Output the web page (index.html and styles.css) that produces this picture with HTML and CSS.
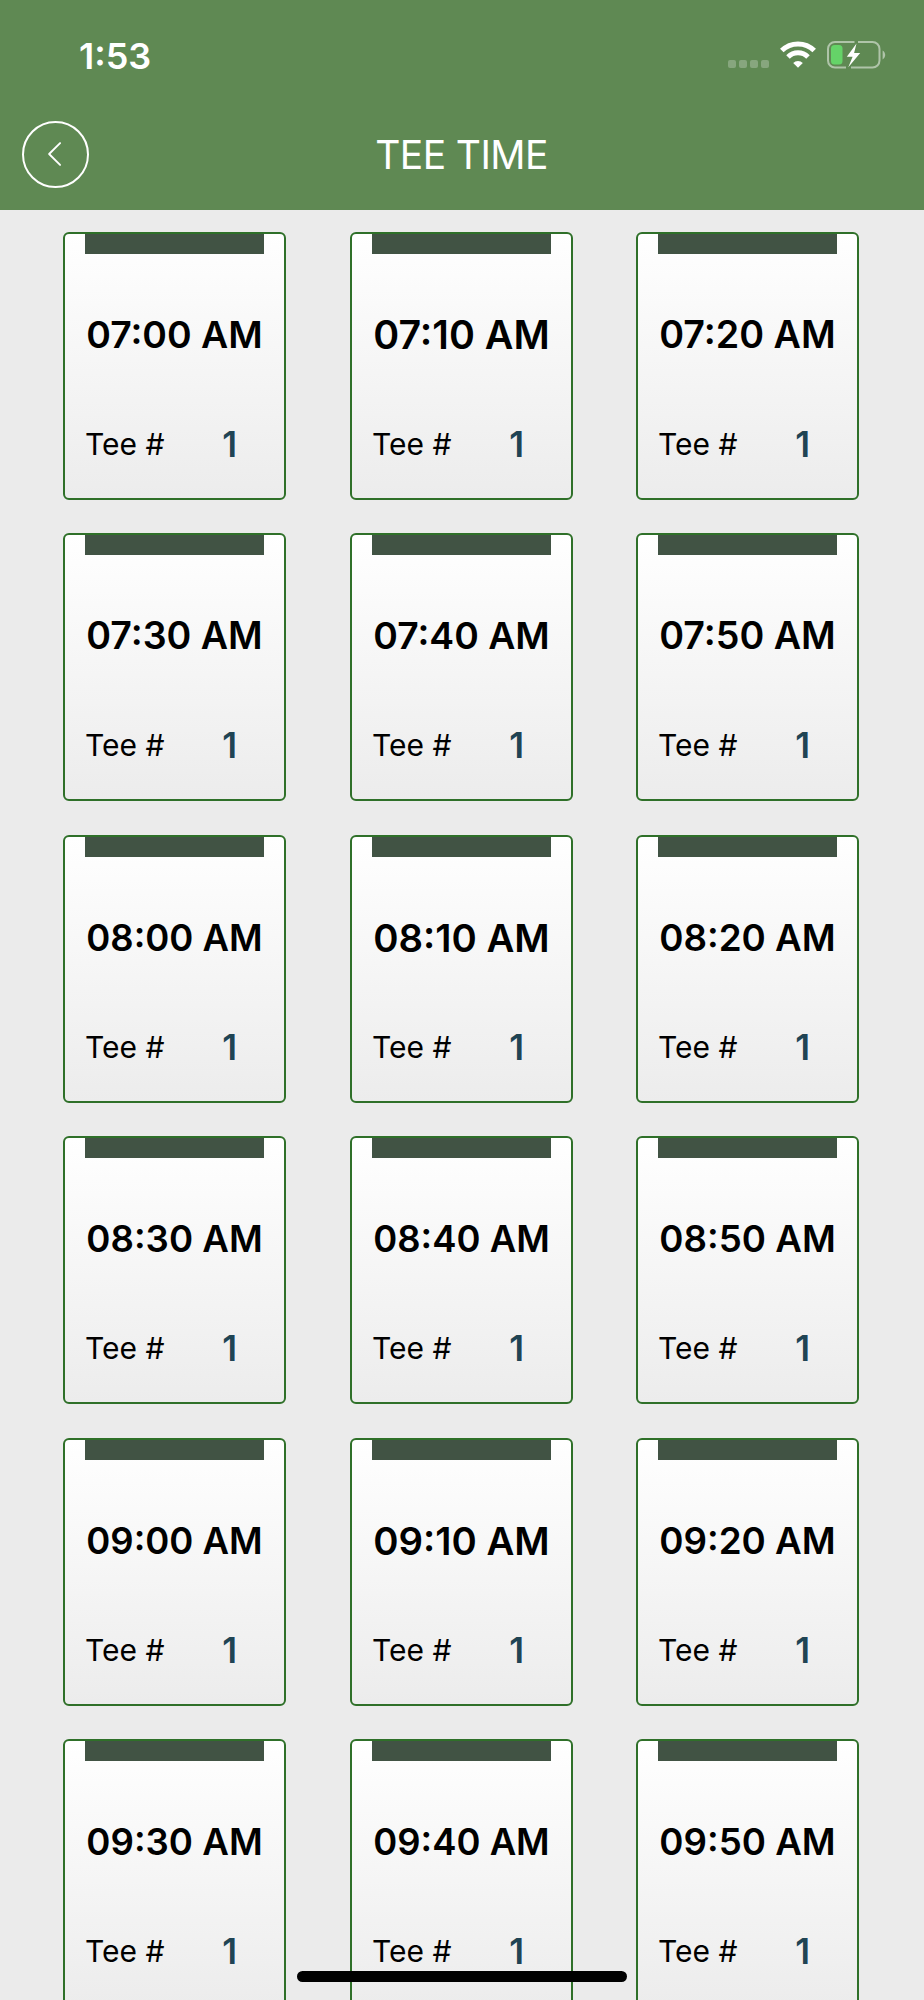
FILE: index.html
```
<!DOCTYPE html>
<html lang="en">
<head>
  <meta charset="UTF-8" />
  <meta name="viewport" content="width=device-width, initial-scale=1.0"/>
  <title>Tee Time</title>
  <link rel="stylesheet" href="styles.css">
</head>
<body>
  <header>
    <div class="status-bar">
      <span class="clock">1:53</span>
      <div class="status-icons">
        <div class="signal"><i></i><i></i><i></i><i></i></div>
        <svg class="wifi" width="36" height="28" viewBox="0 0 36 28">
          <g fill="none" stroke="#fff" stroke-width="5">
            <path d="M1.8 9.6a23 23 0 0 1 32.4 0"/>
            <path d="M8 15.9a14.2 14.2 0 0 1 20 0"/>
          </g>
          <path d="M18 26.8l-4.8-4.9a6.9 6.9 0 0 1 9.6 0z" fill="#fff"/>
        </svg>
        <svg class="battery" width="60" height="30" viewBox="0 0 60 30">
          <g fill="none" stroke="#fff" stroke-opacity=".5" stroke-width="2">
            <path d="M28.5 2H9a7 7 0 0 0-7 7v11.500a7 7 0 0 0 7 7h11"/>
            <path d="M32 2h14.500a7 7 0 0 1 7 7v11.500a7 7 0 0 1-7 7H25"/>
          </g>
          <path d="M56.600 10.500a5.200 5.200 0 0 1 0 9z" fill="#fff" fill-opacity=".5"/>
          <rect x="5" y="5" width="11.500" height="19.500" rx="3.500" fill="#65d368"/>
          <path d="M30.500 3.500L20.800 16.700h5.800L22.300 27.300 34.200 13h-6.100z" fill="#fff"/>
        </svg>
      </div>
    </div>
    <div class="nav-bar">
      <button class="back" aria-label="Back">
        <svg width="15" height="26" viewBox="0 0 16 28">
          <path d="M14 2.200L2.200 14 14 25.800" fill="none" stroke="#fff" stroke-width="2" stroke-linecap="round" stroke-linejoin="round"/>
        </svg>
      </button>
      <h1>TEE TIME</h1>
    </div>
  </header>

  <main id="tee-list" class="tee-list"></main>

  <div class="home-indicator"></div>

  <script>
    const TIME_WIDTH = 176.5;
    const teeList = document.getElementById("tee-list");

    const formatTime = minutes => {
      const h = String(Math.floor(minutes / 60)).padStart(2, "0");
      const m = String(minutes % 60).padStart(2, "0");
      return `${h}:${m} AM`;
    };

    const fitTime = el => {
      const size = parseFloat(getComputedStyle(el).fontSize);
      el.style.fontSize = `${size * TIME_WIDTH / el.getBoundingClientRect().width}px`;
    };

    for (let t = 7 * 60; t < 10 * 60; t += 10) {
      const card = document.createElement("div");
      card.className = "card";
      card.innerHTML = `
        <div class="card-bar"></div>
        <div class="card-time"><span>${formatTime(t)}</span></div>
        <div class="card-tee"><span>Tee #</span><b>1</b></div>`;
      teeList.appendChild(card);
      fitTime(card.querySelector(".card-time span"));
    }
  </script>
</body>
</html>
```
FILE: styles.css
```
* {
  box-sizing: border-box;
}
body {
  margin: 0;
  height: 2000px;
  overflow: hidden;
  font-family: Inter, "Liberation Sans", sans-serif;
  background: #ebebeb;
  color: #000;
}
header {
  height: 210px;
  background: #5f8953;
  color: #fff;
}
.status-bar {
  display: flex;
  justify-content: space-between;
  height: 110px;
  padding: 34px 38px 0 79px;
}
.clock {
  font-size: 36px;
  font-weight: 600;
  line-height: 44px;
}
.status-icons {
  display: flex;
  align-items: flex-start;
  padding-top: 6px;
}
.signal {
  display: flex;
  gap: 3px;
  margin: 20px 11px 0 0;
}
.signal i {
  width: 8px;
  height: 8px;
  border-radius: 2px;
  background: rgba(255, 255, 255, 0.25);
}
.wifi {
  margin: 1px 10px 0 0;
}
.nav-bar {
  display: grid;
  grid-template-columns: 67px 1fr 67px;
  align-items: center;
  height: 88px;
  padding: 0 23px 0 22px;
}
.back {
  display: flex;
  align-items: center;
  justify-content: center;
  width: 67px;
  height: 67px;
  padding: 0 3px 0 0;
  border: 2px solid #fff;
  border-radius: 50%;
  background: none;
}
h1 {
  margin: 0;
  font-size: 39px;
  font-weight: 400;
  letter-spacing: -0.6px;
  text-align: center;
}
.tee-list {
  display: grid;
  grid-template-columns: 223px 223px 223px;
  grid-auto-rows: 268px;
  justify-content: start;
  column-gap: 63.500px;
  row-gap: 33.400px;
  padding: 22px 0 0 63px;
}
.card {
  padding: 0 20px;
  border: 2px solid #2f7029;
  border-radius: 6px;
  background: linear-gradient(#fff, #ececec);
}
.card:nth-child(3n + 2) {
  margin: 0 -0.500px 0 0.500px;
}
.card-bar {
  height: 20px;
  background: #415344;
}
.card-time {
  height: 48px;
  margin: 57px -10px 0;
  font-size: 37px;
  font-weight: 600;
  line-height: 48px;
  text-align: center;
  white-space: nowrap;
}
.card-tee {
  display: flex;
  align-items: center;
  justify-content: space-between;
  margin-top: 63px;
  padding: 0 27px 0 0;
  font-size: 30px;
  line-height: 44px;
}
.card-tee b {
  font-size: 35px;
  font-weight: 600;
  color: #1f4454;
}
.home-indicator {
  position: fixed;
  left: 297px;
  bottom: 18px;
  width: 330px;
  height: 11px;
  border-radius: 6px;
  background: #000;
}
```
